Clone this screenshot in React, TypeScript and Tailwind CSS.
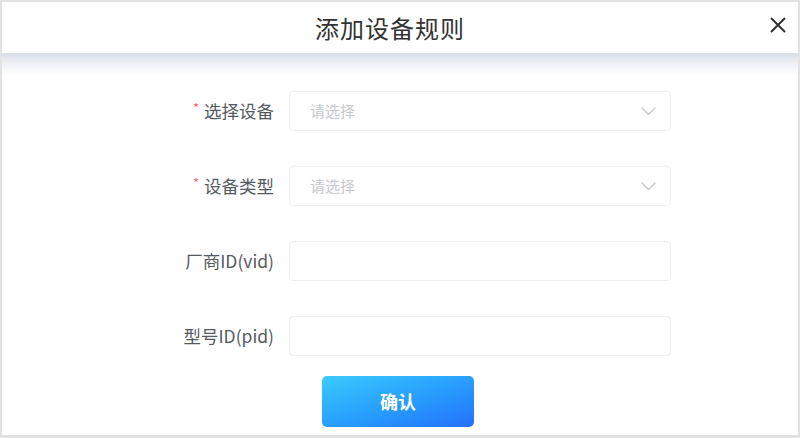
import React from "react";

const FONT = { fontFamily: '"Noto Sans CJK SC", "Noto Sans", sans-serif' };

function Chevron() {
  return (
    <svg width="15" height="9" viewBox="0 0 15 9" fill="none" className="shrink-0">
      <path d="M1 1l6.5 6.5L14 1" stroke="#c0c4cc" strokeWidth="1.3" strokeLinecap="round" strokeLinejoin="round" />
    </svg>
  );
}

function Field({
  label,
  required,
  select,
}: {
  label: string;
  required?: boolean;
  select?: boolean;
}) {
  return (
    <div className="flex items-center">
      <label className="flex w-[272px] items-center justify-end text-[17.5px] text-[#555a60]">
        {required ? <span className="mr-[5px] -mt-[6px] text-[13px] text-[#f56c6c]">*</span> : null}
        {label}
      </label>
      <div className="ml-[15px] flex h-[40px] w-[382px] items-center justify-between rounded-[4px] border border-[#eceef2] bg-white pl-[20px] pr-[14px]">
        {select ? (
          <>
            <span className="text-[15px] text-[#c6c8cc]">请选择</span>
            <Chevron />
          </>
        ) : null}
      </div>
    </div>
  );
}

export default function App() {
  return (
    <div
      className="flex h-[438px] w-[800px] flex-col overflow-hidden border-2 border-b-[3px] border-[#e2e2e2] bg-white"
      style={FONT}
    >
      <div className="relative flex h-[51px] shrink-0 items-center justify-center pr-[20px]">
        <h1 className="text-[24px] font-normal tracking-[1px] text-[#333333]">添加设备规则</h1>
        <button className="absolute right-[11px] top-[14px] grid h-[18px] w-[18px] place-items-center">
          <svg width="16" height="16" viewBox="0 0 16 16" fill="none">
            <path d="M1.5 1.5l13 13M14.5 1.5l-13 13" stroke="#2e2e2e" strokeWidth="1.9" strokeLinecap="round" />
          </svg>
        </button>
      </div>
      <div className="h-[22px] shrink-0 bg-linear-to-b from-[#d8dfe8] via-[#eef1f5] to-white" />

      <div className="flex flex-col gap-[35px] pt-[16px]">
        <Field label="选择设备" required select />
        <Field label="设备类型" required select />
        <Field label="厂商ID(vid)" />
        <Field label="型号ID(pid)" />
      </div>

      <button className="ml-[320px] mt-[20px] h-[51px] w-[152px] rounded-[5px] bg-linear-to-br from-[#3bcbfd] to-[#2670fa] text-[18px] font-bold text-white">
        确认
      </button>
    </div>
  );
}
